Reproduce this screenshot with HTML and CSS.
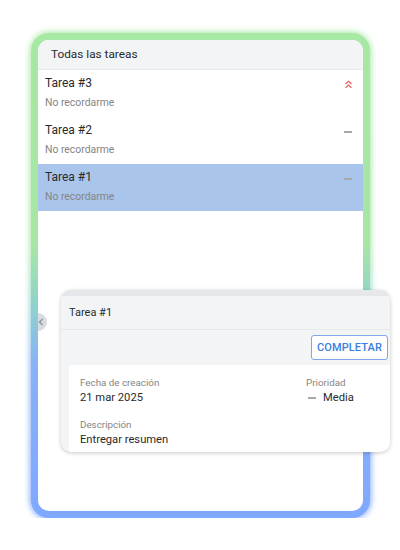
FILE: index.html
```html
<!DOCTYPE html>
<html lang="es">
<head>
<meta charset="utf-8">
<link rel="stylesheet" href="styles.css">
</head>
<body>
<div class="frame">
  <div class="card">
    <div class="card-head">Todas las tareas</div>
    <div class="row">
      <div class="row-text">
        <div class="row-title">Tarea #3</div>
        <div class="row-sub">No recordarme</div>
      </div>
      <svg class="prio-icon" width="9" height="9" viewBox="0 0 9 9"><path d="M1.5 4 L4.5 1.2 L7.5 4 M1.5 7.8 L4.5 5 L7.5 7.8" fill="none" stroke="#e8605a" stroke-width="1.2"/></svg>
    </div>
    <div class="row">
      <div class="row-text">
        <div class="row-title">Tarea #2</div>
        <div class="row-sub">No recordarme</div>
      </div>
      <span class="dash"></span>
    </div>
    <div class="row row-selected">
      <div class="row-text">
        <div class="row-title">Tarea #1</div>
        <div class="row-sub">No recordarme</div>
      </div>
      <span class="dash"></span>
    </div>
    <div class="handle"><svg width="6" height="8" viewBox="0 0 6 8"><path d="M4.5 1 L1.5 4 L4.5 7" fill="none" stroke="#8a8f96" stroke-width="1.2"/></svg></div>
  </div>
  <div class="detail">
    <div class="detail-strip"></div>
    <div class="detail-head">Tarea #1</div>
    <div class="detail-actions"><button class="btn">COMPLETAR</button></div>
    <div class="detail-body">
      <div class="field">
        <div class="label">Fecha de creación</div>
        <div class="value">21 mar 2025</div>
      </div>
      <div class="field">
        <div class="label">Prioridad</div>
        <div class="value"><span class="dash dash-inline"></span>Media</div>
      </div>
      <div class="field field-wide">
        <div class="label">Descripción</div>
        <div class="value">Entregar resumen</div>
      </div>
    </div>
  </div>
</div>
</body>
</html>
```
FILE: styles.css
```css
* { box-sizing: border-box; }
html, body { margin: 0; background: #fff; }
body {
  padding: 33px 0 0 31px;
  font-family: Roboto, "Liberation Sans", sans-serif;
  color: #2a2a2a;
}
.frame {
  position: relative;
  isolation: isolate;
  width: 339px;
  height: 485px;
  padding: 7px;
  border-radius: 18px;
  background: linear-gradient(180deg, #a7e8a4 0%, #a6e6a6 44%, #8fd0cf 57%, #87b2f6 68%, #7fa8ff 100%);
}
.frame::before {
  content: "";
  position: absolute;
  inset: -1px;
  border-radius: 19px;
  background: linear-gradient(180deg, #a7e8a4 0%, #a6e6a6 44%, #8fd0cf 57%, #87b2f6 68%, #7fa8ff 100%);
  filter: blur(3px);
  z-index: -1;
}
.card {
  position: relative;
  height: 100%;
  background: #fff;
  border-radius: 11px;
  overflow: hidden;
}
.card-head {
  height: 30px;
  line-height: 29px;
  padding-left: 13px;
  font-size: 11.8px;
  color: #2a2a2a;
  background: #f3f4f6;
  border-bottom: 1px solid #e6e8eb;
}
.row {
  height: 47px;
  display: flex;
  align-items: flex-start;
  justify-content: space-between;
  padding: 5px 10px 0 7px;
}
.row-selected { background: #a9c5ec; }
.row-title { font-size: 12px; line-height: 17px; color: #2a2a2a; }
.row-sub { font-size: 10.4px; line-height: 17px; margin-top: 2px; color: #858585; }
.prio-icon { margin-top: 5px; }
.dash {
  display: inline-block;
  width: 8px;
  height: 1.5px;
  background: #a9a9a9;
  margin-top: 9px;
  margin-right: 1px;
}
.handle {
  position: absolute;
  left: -9px;
  top: 273px;
  width: 18px;
  height: 18px;
  border-radius: 50%;
  background: #d8dbe0;
  display: flex;
  align-items: center;
  justify-content: flex-end;
  padding-right: 3px;
}
.detail {
  position: absolute;
  left: 30px;
  top: 257px;
  width: 329px;
  height: 162px;
  border-radius: 10px;
  overflow: hidden;
  background: #f3f4f6;
  box-shadow: 0 1px 4px rgba(0,0,0,0.22);
}
.detail-strip { height: 6px; background: #e5e7eb; }
.detail-head {
  height: 34px;
  line-height: 33px;
  padding-left: 8px;
  font-size: 11px;
  color: #2a2a2a;
  border-bottom: 1px solid #e6e8eb;
}
.detail-actions {
  height: 35px;
  display: flex;
  justify-content: flex-end;
  align-items: flex-start;
  padding: 5px 2px 0 0;
}
.btn {
  height: 25px;
  padding: 0 5px;
  border: 1px solid #7ea8e8;
  border-radius: 3px;
  background: #fff;
  color: #3b7de0;
  font-family: Roboto, "Liberation Sans", sans-serif;
  font-size: 11px;
  font-weight: 500;
  letter-spacing: 0.1px;
}
.detail-body {
  margin-left: 8px;
  background: #fff;
  height: 100%;
  padding: 11px 0 0 11px;
  display: grid;
  grid-template-columns: 226px 1fr;
  row-gap: 12px;
  align-content: start;
}
.field-wide { grid-column: 1 / 3; }
.label { font-size: 9.8px; line-height: 14px; color: #858585; }
.value { font-size: 11.2px; line-height: 16px; color: #2a2a2a; display: flex; align-items: center; }
.dash-inline { margin: 0 7px 0 2px; }
```
